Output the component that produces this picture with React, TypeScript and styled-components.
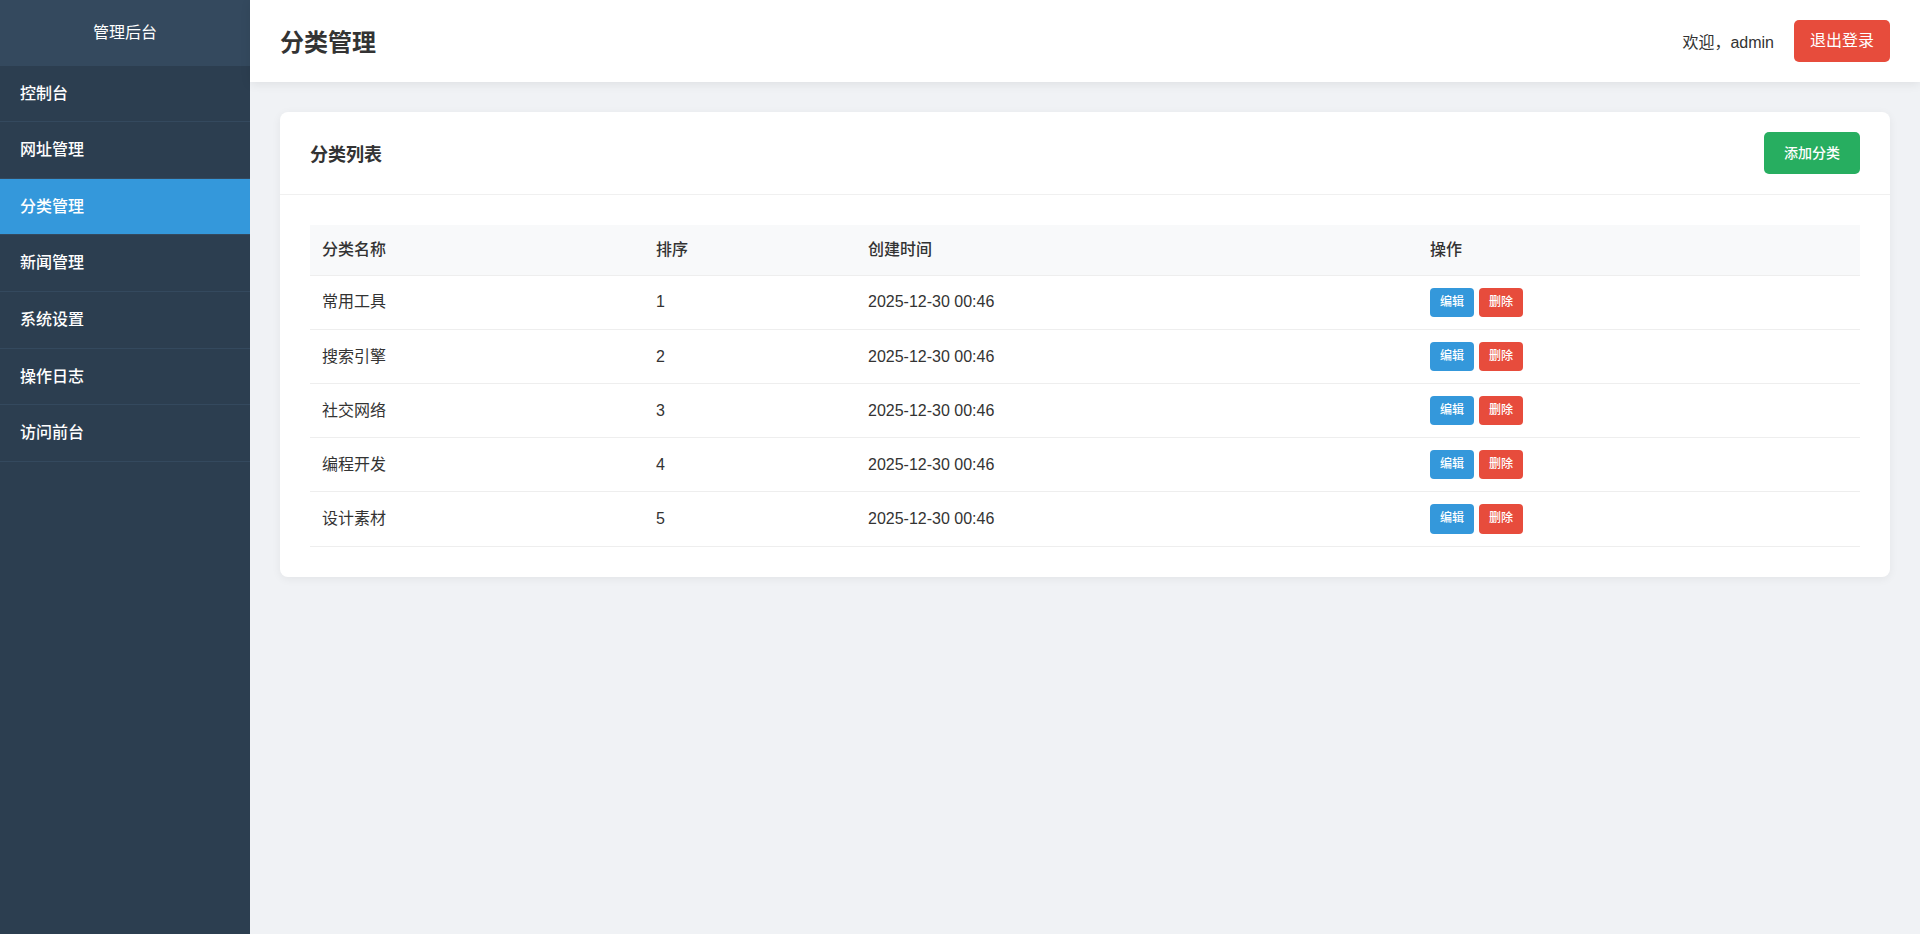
import styled, { createGlobalStyle } from "styled-components";

const GlobalStyle = createGlobalStyle`
  * { box-sizing: border-box; }
  body {
    margin: 0;
    font-family: "Liberation Sans", "Noto Sans CJK SC", sans-serif;
    color: #333;
    background: #f0f2f5;
  }
`

const Layout = styled.div`
  display: flex;
  min-height: 100vh;
`

const Sidebar = styled.aside`
  width: 250px;
  flex-shrink: 0;
  background: #2c3e50;
  color: #ecf0f1;
`

const Logo = styled.div`
  padding: 20px;
  font-size: 16px;
  line-height: 1.6;
  text-align: center;
  background: #34495e;
  color: #fff;
`

const MenuItem = styled.a<{ $active?: boolean }>`
  display: block;
  padding: 15px 20px;
  font-size: 16px;
  font-weight: 500;
  line-height: 1.6;
  color: #fff;
  text-decoration: none;
  border-bottom: 1px solid #34495e;
  background: ${(p) => (p.$active ? "#3498db" : "transparent")};
`

const Main = styled.main`
  flex: 1;
  display: flex;
  flex-direction: column;
`

const Topbar = styled.header`
  display: flex;
  align-items: center;
  justify-content: space-between;
  padding: 20px 30px;
  background: #fff;
  box-shadow: 0 2px 10px rgba(0, 0, 0, 0.08);
`

const PageTitle = styled.h1`
  margin: 0;
  font-size: 24px;
  font-weight: bold;
  color: #333;
`

const UserBox = styled.div`
  display: flex;
  align-items: center;
  gap: 20px;
  font-size: 16px;
  color: #333;
`

const Button = styled.button<{ $color: string; $size?: "sm" | "md" | "lg" }>`
  border: none;
  cursor: pointer;
  color: #fff;
  font-family: inherit;
  line-height: 1.6;
  background: ${(p) => p.$color};
  font-weight: ${(p) => (p.$size === "lg" ? 400 : 500)};
  font-size: ${(p) => (p.$size === "sm" ? "12px" : p.$size === "lg" ? "16px" : "14px")};
  padding: ${(p) => (p.$size === "sm" ? "5px 10px" : p.$size === "lg" ? "8px 16px" : "10px 20px")};
  border-radius: ${(p) => (p.$size === "sm" ? "4px" : "5px")};
`

const Content = styled.div`
  padding: 30px;
`

const Card = styled.section`
  background: #fff;
  border-radius: 8px;
  box-shadow: 0 2px 10px rgba(0, 0, 0, 0.06);
`

const CardHeader = styled.div`
  display: flex;
  align-items: center;
  justify-content: space-between;
  padding: 20px 30px;
  border-bottom: 1px solid #f0f0f0;
`

const CardTitle = styled.h2`
  margin: 0;
  font-size: 18px;
  font-weight: bold;
  color: #333;
`

const CardBody = styled.div`
  padding: 30px;
`

const Table = styled.table`
  width: 100%;
  border-collapse: collapse;
  table-layout: fixed;
  font-size: 16px;
`

const Th = styled.th<{ $w: number }>`
  width: ${(p) => p.$w}px;
  padding: 12px;
  text-align: left;
  font-weight: 500;
  line-height: 1.6;
  color: #333;
  background: #f8f9fa;
  border-bottom: 1px solid #eee;
`

const Td = styled.td`
  padding: 12px;
  height: 54px;
  line-height: 1.6;
  color: #333;
  border-bottom: 1px solid #eee;
`

const Actions = styled.div`
  display: flex;
  gap: 5px;
`

const menu = ["控制台", "网址管理", "分类管理", "新闻管理", "系统设置", "操作日志", "访问前台"]

const rows = [
  { name: "常用工具", sort: 1 },
  { name: "搜索引擎", sort: 2 },
  { name: "社交网络", sort: 3 },
  { name: "编程开发", sort: 4 },
  { name: "设计素材", sort: 5 },
]

export default function App() {
  return (
    <Layout>
      <GlobalStyle />
      <Sidebar>
        <Logo>管理后台</Logo>
        {menu.map((m) => (
          <MenuItem key={m} href="#" $active={m === "分类管理"}>
            {m}
          </MenuItem>
        ))}
      </Sidebar>
      <Main>
        <Topbar>
          <PageTitle>分类管理</PageTitle>
          <UserBox>
            <span>欢迎，admin</span>
            <Button $color="#e74c3c" $size="lg">退出登录</Button>
          </UserBox>
        </Topbar>
        <Content>
          <Card>
            <CardHeader>
              <CardTitle>分类列表</CardTitle>
              <Button $color="#27ae60">添加分类</Button>
            </CardHeader>
            <CardBody>
              <Table>
                <thead>
                  <tr>
                    <Th $w={334}>分类名称</Th>
                    <Th $w={212}>排序</Th>
                    <Th $w={562}>创建时间</Th>
                    <Th $w={442}>操作</Th>
                  </tr>
                </thead>
                <tbody>
                  {rows.map((r) => (
                    <tr key={r.name}>
                      <Td>{r.name}</Td>
                      <Td>{r.sort}</Td>
                      <Td>2025-12-30 00:46</Td>
                      <Td>
                        <Actions>
                          <Button $color="#3498db" $size="sm">编辑</Button>
                          <Button $color="#e74c3c" $size="sm">删除</Button>
                        </Actions>
                      </Td>
                    </tr>
                  ))}
                </tbody>
              </Table>
            </CardBody>
          </Card>
        </Content>
      </Main>
    </Layout>
  )
}
